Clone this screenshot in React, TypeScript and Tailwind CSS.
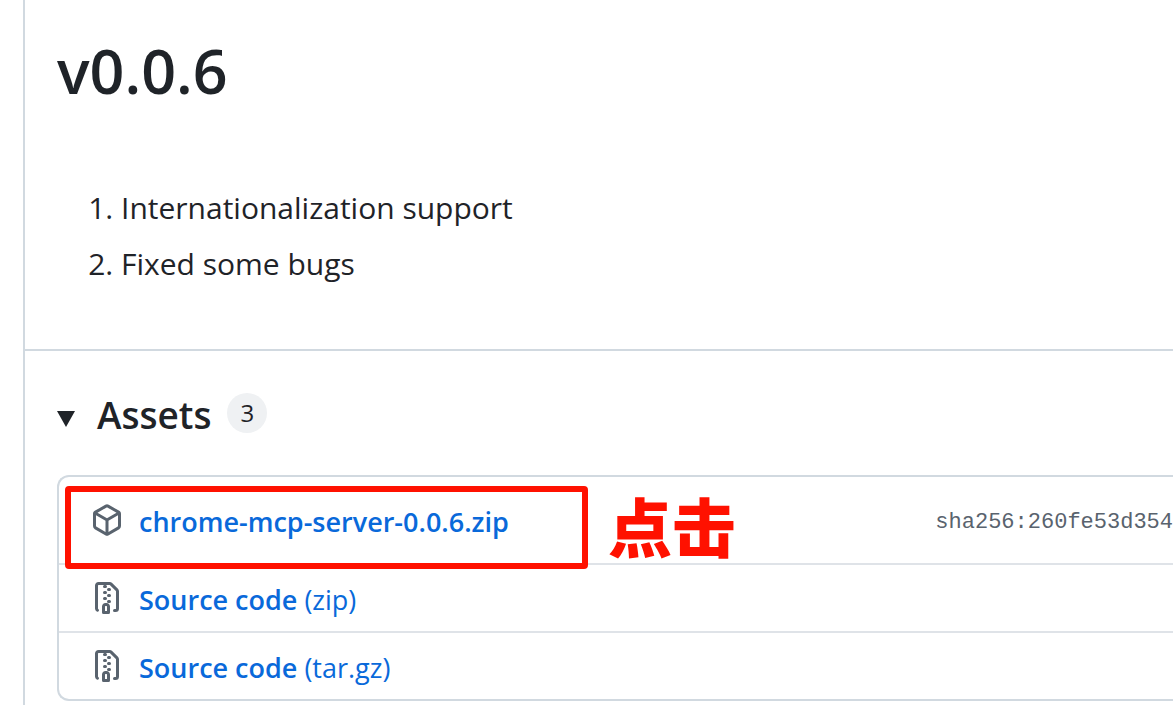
import type { ReactNode } from "react";

const notes = ["Internationalization support", "Fixed some bugs"];

function PackageIcon() {
  return (
    <svg
      viewBox="0 0 16 16"
      fill="currentColor"
      aria-hidden="true"
      className="size-8 shrink-0 text-[#59636e]"
    >
      <path d="m8.878.392 5.25 3.045c.54.314.872.89.872 1.514v6.098a1.75 1.75 0 0 1-.872 1.514l-5.25 3.045a1.75 1.75 0 0 1-1.756 0l-5.25-3.045A1.75 1.75 0 0 1 1 11.049V4.951c0-.624.332-1.201.872-1.514L7.122.392a1.75 1.75 0 0 1 1.756 0ZM7.875 1.69l-4.63 2.685L8 7.133l4.755-2.758-4.63-2.685a.248.248 0 0 0-.25 0ZM2.5 5.677v5.372c0 .09.047.171.125.216l4.625 2.683V8.432Zm6.25 8.271 4.625-2.683a.25.25 0 0 0 .125-.216V5.677L8.75 8.432Z" />
    </svg>
  );
}

function ZipIcon() {
  return (
    <svg
      viewBox="0 0 16 16"
      fill="currentColor"
      aria-hidden="true"
      className="size-8 shrink-0 text-[#59636e]"
    >
      <path d="M3.5 1.75v11.5c0 .09.048.173.126.217a.75.75 0 0 1-.752 1.298A1.748 1.748 0 0 1 2 13.25V1.75C2 .784 2.784 0 3.75 0h5.586c.464 0 .909.185 1.237.513l2.914 2.914c.329.328.513.773.513 1.237v8.586A1.75 1.75 0 0 1 12.25 15h-.5a.75.75 0 0 1 0-1.5h.5a.25.25 0 0 0 .25-.25V4.664a.25.25 0 0 0-.073-.177L9.513 1.573a.25.25 0 0 0-.177-.073H7.25a.75.75 0 0 1 0 1.5h-.5a.75.75 0 0 1 0-1.5h-3a.25.25 0 0 0-.25.25Zm3.75 8.75h.5c.966 0 1.75.784 1.75 1.75v3a.75.75 0 0 1-.75.75h-2.5a.75.75 0 0 1-.75-.75v-3c0-.966.784-1.75 1.75-1.75ZM6 5.25a.75.75 0 0 1 .75-.75h.5a.75.75 0 0 1 0 1.5h-.5A.75.75 0 0 1 6 5.25Zm.75 2.25h.5a.75.75 0 0 1 0 1.5h-.5a.75.75 0 0 1 0-1.5ZM8 6.75A.75.75 0 0 1 8.75 6h.5a.75.75 0 0 1 0 1.5h-.5A.75.75 0 0 1 8 6.75ZM8.75 3h.5a.75.75 0 0 1 0 1.5h-.5a.75.75 0 0 1 0-1.5ZM8 9.75A.75.75 0 0 1 8.75 9h.5a.75.75 0 0 1 0 1.5h-.5A.75.75 0 0 1 8 9.75Zm-1 2.5v2.25h1v-2.25a.25.25 0 0 0-.25-.25h-.5a.25.25 0 0 0-.25.25Z" />
    </svg>
  );
}

function SourceRow({ children }: { children: ReactNode }) {
  return (
    <li className="flex h-17 items-center gap-4 border-t-2 border-[#dfe3e8] pl-8">
      <ZipIcon />
      <a href="#" className="pt-1 text-[27px] leading-9 text-[#0969da]">
        <span className="font-semibold">Source code</span> {children}
      </a>
    </li>
  );
}

export default function App() {
  return (
    <main className="ml-[23px] min-h-screen overflow-hidden border-l-2 border-[#d1d9e0] bg-white font-['Open_Sans','Noto_Sans',sans-serif] text-[#1f2328]">
      <section className="px-8 pt-6 pb-[61px]">
        <h1 className="text-[61px] leading-[94px] font-semibold">v0.0.6</h1>
        <ol className="mt-[66px] list-decimal space-y-2 pl-16 text-[30px] leading-12">
          {notes.map((note) => (
            <li key={note}>{note}</li>
          ))}
        </ol>
      </section>

      <details open className="border-t-2 border-[#d1d9e0] pt-9 pl-8">
        <summary className="flex cursor-pointer list-none items-center">
          <svg
            viewBox="0 0 18 16"
            fill="currentColor"
            aria-hidden="true"
            className="mt-2 h-4 w-[18px]"
          >
            <path d="M0 0h18L9 16Z" />
          </svg>
          <h2 className="ml-[22px] text-[37px] leading-14 font-semibold">
            Assets
          </h2>
          <span className="mb-1 ml-4 flex size-10 items-center justify-center rounded-full bg-[#eff1f3] text-2xl font-medium">
            3
          </span>
        </summary>

        <div className="relative mt-8">
          <ul className="rounded-l-xl border-2 border-r-0 border-[#d1d9e0]">
            <li className="flex h-[86px] items-center gap-4 pl-8">
              <PackageIcon />
              <a
                href="#"
                className="pt-1 text-[27px] leading-9 font-semibold text-[#0969da]"
              >
                chrome-mcp-server-0.0.6.zip
              </a>
              <span className="ml-auto pt-1 font-['Liberation_Mono',monospace] text-[22px] text-[#59636e]">
                sha256:260fe53d354
              </span>
            </li>
            <SourceRow>(zip)</SourceRow>
            <SourceRow>(tar.gz)</SourceRow>
          </ul>

          {/* Click hint over the first asset */}
          <div className="pointer-events-none absolute top-[11px] left-2 flex items-center gap-5">
            <div className="h-[83px] w-[523px] rounded-sm border-6 border-[#ff1100]" />
            <span className="pb-2 font-['Noto_Sans_CJK_SC',sans-serif] text-[64px] leading-none font-black text-[#ff1100]">
              点击
            </span>
          </div>
        </div>
      </details>
    </main>
  );
}
